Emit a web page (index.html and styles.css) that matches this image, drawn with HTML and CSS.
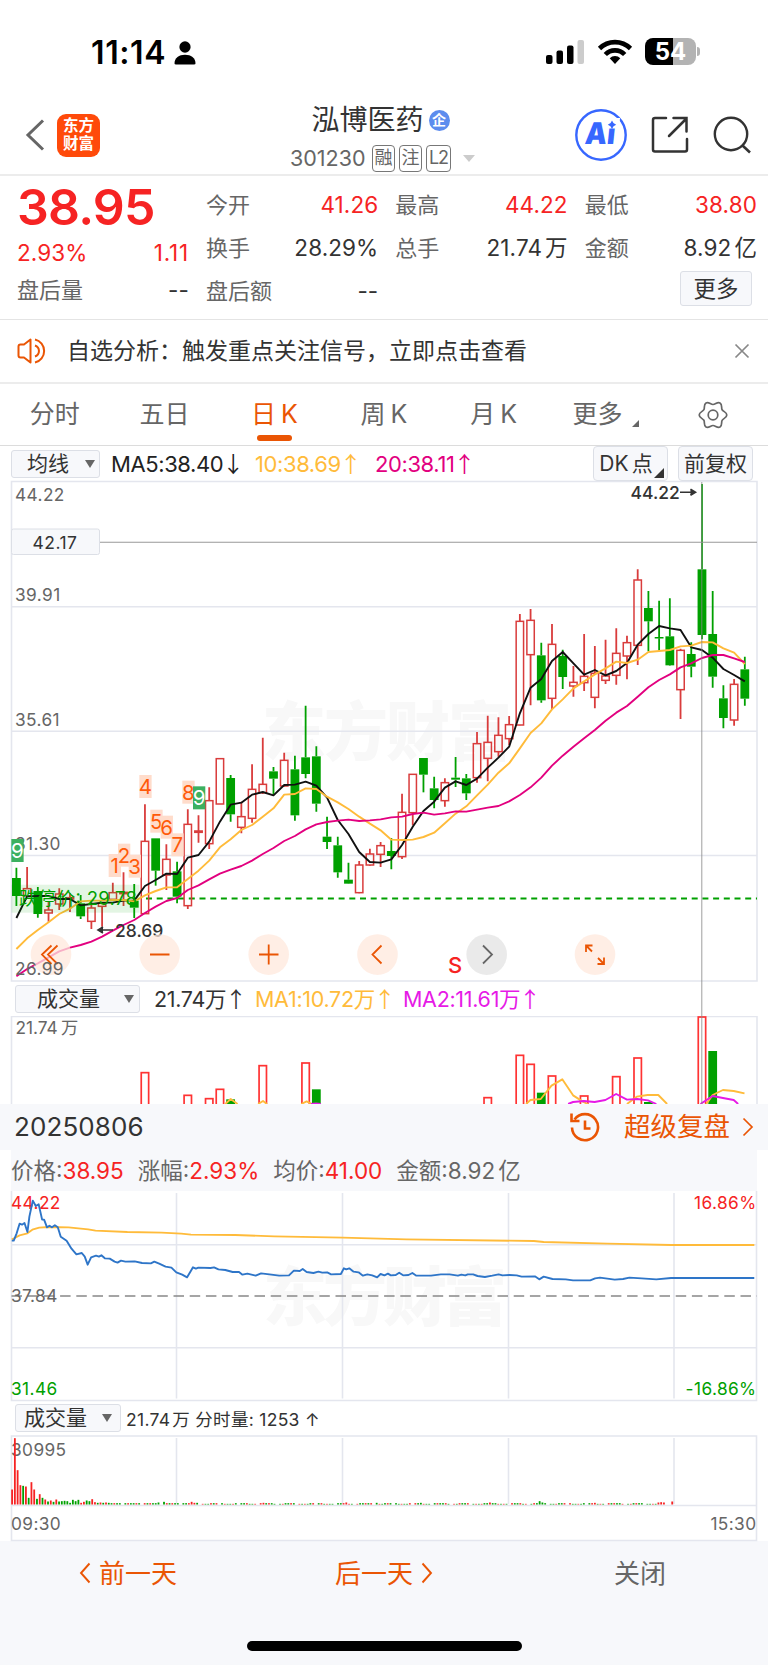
FILE: index.html
```html
<!DOCTYPE html>
<html lang="zh-CN">
<head>
  <meta charset="UTF-8">
  <meta name="viewport" content="width=device-width, initial-scale=1.0">
  <link rel="stylesheet" href="styles.css">
  <title>泓博医药 301230</title>
</head>
<body>
  <div class="status">
    <div class="status-left">
      <span class="clock">11:14</span>
      <svg width="22" height="24" viewBox="0 0 22 24"><ellipse cx="11" cy="6" rx="5.6" ry="5.8"/><path d="M0.5 22.5C0.5 17 5 13.8 11 13.8S21.500 17 21.500 22.500Q21.500 23.500 20 23.500H2Q.5 23.500 .5 22.500Z"/></svg>
    </div>
    <div class="status-right">
      <svg width="40" height="26" viewBox="0 0 40 26"><rect x="1" y="16" width="6.500" height="9" rx="2"/><rect x="11.500" y="11.500" width="6.500" height="13.500" rx="2"/><rect x="22" y="6.500" width="6.500" height="18.500" rx="2"/><rect x="32.500" y="1" width="6.500" height="24" rx="2" fill="#ccc"/></svg>
      <svg width="36" height="26" viewBox="0 0 36 26"><g fill="none" stroke="#000" stroke-width="4.600"><path d="M2.500 9.500a22 22 0 0 1 31 0"/><path d="M8.300 15.500a13.500 13.500 0 0 1 19.400 0"/></g><path d="M18 25l-5.300-5.700a7.500 7.500 0 0 1 10.600 0z"/></svg>
      <div class="battery"><span>54</span></div>
    </div>
  </div>

  <header class="header">
    <div class="header-left">
      <svg width="20" height="32" viewBox="0 0 20 32"><path d="M18 1.500L3 16l15 14.500" fill="none" stroke="#666" stroke-width="3"/></svg>
      <div class="logo">东方<br>财富</div>
    </div>
    <div class="header-title">
      <div class="name">泓博医药<span class="ent">企</span></div>
      <div class="code"><span class="code-no">301230</span><i class="tag">融</i><i class="tag">注</i><i class="tag tag-wide">L2</i><b class="drop"></b></div>
    </div>
    <div class="header-right">
      <svg width="52" height="52" viewBox="0 0 52 52"><circle cx="26" cy="26" r="24.700" fill="#fff" stroke="#3767ff" stroke-width="2.400"/><g transform="skewX(-6)"><text class="ai" x="13" y="35.500" textLength="30" lengthAdjust="spacingAndGlyphs">Ai</text><path d="M34 9H46V19.500H34Z" fill="#fff"/></g><path d="M37 11.500q1 3.300 4.200 4.200q-3.200 1-4.200 4.200q-1-3.200-4.200-4.200q3.200-.9 4.200-4.200z" fill="#3767ff"/></svg>
      <svg width="38" height="38" viewBox="0 0 38 38"><path d="M15 2H4Q2 2 2 4V33.500Q2 35.500 4 35.500H34Q36 35.500 36 33.500V23M22.500 2H35.500V15.500M35.500 2.500L18 20" fill="none" stroke="#333" stroke-width="2.500" stroke-linecap="round"/></svg>
      <svg width="38" height="38" viewBox="0 0 38 38"><circle cx="18" cy="18" r="16.200" fill="none" stroke="#333" stroke-width="2.400"/><path d="M29.500 29.500l7.500 7" stroke="#333" stroke-width="2.600"/></svg>
    </div>
  </header>

  <section class="quote">
    <div class="quote-main">
      <div class="price">38.95</div>
      <div class="cell red"><span>2.93%</span><span class="change">1.11</span></div>
      <div class="cell after"><label>盘后量</label><span>--</span></div>
    </div>
    <div class="quote-grid">
      <div class="cell"><label>今开</label><span class="red">41.26</span></div>
      <div class="cell"><label>最高</label><span class="red">44.22</span></div>
      <div class="cell"><label>最低</label><span class="red">38.80</span></div>
      <div class="cell"><label>换手</label><span>28.29%</span></div>
      <div class="cell"><label>总手</label><span>21.74<em>万</em></span></div>
      <div class="cell"><label>金额</label><span>8.92<em>亿</em></span></div>
      <div class="cell"><label>盘后额</label><span>--</span></div>
      <div></div>
      <div class="more"><button class="btn btn-more">更多</button></div>
    </div>
  </section>

  <section class="notice">
    <svg width="31" height="26" viewBox="0 0 31 26" fill="none" stroke="#ea5504" stroke-width="2"><path d="M13.500 1.500V24.500L7 19.500H3.500Q1.500 19.500 1.500 17.500V8.500Q1.500 6.500 3.500 6.500H7Z" stroke-linejoin="round"/><path d="M18 7.500a5.800 5.800 0 0 1 0 11M18 1.500a11.800 11.800 0 0 1 0 23"/></svg>
    <p>自选分析：触发重点关注信号，立即点击查看</p>
    <svg width="16" height="16" viewBox="0 0 16 16"><path d="M1.500 1.500l13 13M14.500 1.500l-13 13" stroke="#888" stroke-width="1.700"/></svg>
  </section>

  <nav class="tabs">
    <a>分时</a>
    <a>五日</a>
    <a class="active">日<u>K</u></a>
    <a>周<u>K</u></a>
    <a>月<u>K</u></a>
    <a class="tab-more">更多<b class="corner"></b></a>
    <a><svg width="30" height="30" viewBox="0 0 30 30" fill="none" stroke="#666" stroke-width="1.700"><path d="M28.800 15C28.800 18 25.300 18.200 24.100 20.300C23 22.200 24.600 25.600 22 27.100C19.400 28.600 17.400 25.500 15 25.500C12.600 25.500 10.600 28.600 8 27.100C5.400 25.600 7 22.200 5.900 20.300C4.700 18.200 1.200 18 1.200 15C1.200 12 4.700 11.800 5.900 9.700C7 7.800 5.400 4.400 8 2.900C10.600 1.400 12.600 4.500 15 4.500C17.400 4.500 19.400 1.400 22 2.900C24.600 4.400 23 7.800 24.100 9.700C25.300 11.800 28.800 12 28.800 15Z"/><circle cx="15" cy="15" r="4.800"/></svg></a>
  </nav>

  <div class="ma-row">
    <button class="btn btn-ma">均线<b class="tri"></b></button>
    <span class="ma5">MA5:38.40<s>↓</s></span>
    <span class="ma10">10:38.69<s>↑</s></span>
    <span class="ma20">20:38.11<s>↑</s></span>
    <button class="btn btn-tall btn-dk">DK<em>点</em><b class="corner"></b></button>
    <button class="btn btn-tall">前复权</button>
  </div>

  <svg class="chart" width="768" height="501" viewBox="0 480 768 501">
    <text class="watermark" x="262" y="755" textLength="250">东方财富</text>
    <g class="grid">
      <path d="M11.500 481.500H757V981H11.500ZM11.500 606.700H757M11.500 731.300H757M11.500 855.500H757"/>
    </g>
    <g class="axis">
      <text x="15" y="501">44.22</text>
      <text x="15" y="601.300">39.91</text>
      <text x="15" y="726">35.61</text>
      <text x="15" y="850">31.30</text>
    </g>
    <path d="M146 898.500H757" stroke="#00a000" stroke-width="1.800" stroke-dasharray="6 4.700"/>
    <g class="candles" id="candles"></g>
    <rect x="11.500" y="884.700" width="128" height="28" fill="#00a000" opacity=".11"/>
    <text class="limit" x="19" y="905" textLength="118">跌停价: 29.78</text>
    <g id="counts"></g>
    <g class="mark">
      <text x="115" y="937">28.69</text>
      <text x="630.500" y="498.700">44.22</text>
      <path d="M113 930H99M103 927L98 930L103 933M680 492.300H694M690.500 489.300L695.500 492.300L690.500 495.300"/>
    </g>
    <g class="tools">
      <circle cx="51" cy="954.600" r="20.300"/><circle cx="159.700" cy="954.600" r="20.300"/><circle cx="268.700" cy="954.600" r="20.300"/><circle cx="377.500" cy="954.600" r="20.300"/><circle class="off" cx="486.700" cy="954.600" r="20.300"/><circle cx="595" cy="954.600" r="20.300"/>
      <path d="M51.500 945.500L42 954.600L51.500 964M57.500 945.500L48 954.600L57.500 964M150 954.500H169.500M259 954.500H278.500M268.700 944.500V964.500M381.500 945.500L372.500 954.600L381.500 963.500M592 951.500L586.500 946M586 952V945.500H592.500M598 958L603.500 963.500M604 957.500V964H597.500"/>
      <path class="next" d="M483 945.500L492 954.600L483 963.500"/>
    </g>
    <g class="axis"><text x="15" y="975">26.99</text></g>
    <text class="sell" x="448" y="972.500">S</text>
    <path d="M100 542.300H757" stroke="#999" stroke-width="1.100"/>
    <path d="M701.800 482V1016" stroke="#888" stroke-width="1" opacity=".8"/>
    <rect x="11.500" y="529" width="88" height="25.500" rx="2" fill="#f7f8fb" stroke="#dcdfe6"/>
    <text class="cross" x="32.500" y="549">42.17</text>
  </svg>

  <div class="vol-row">
    <button class="btn btn-vol">成交量<b class="tri"></b></button>
    <span class="v0">21.74万<s>↑</s></span>
    <span class="v1">MA1:10.72万<s>↑</s></span>
    <span class="v2">MA2:11.61万<s>↑</s></span>
  </div>

  <svg class="chart clip" width="768" height="88" viewBox="0 1016 768 88">
    <path class="grid" d="M11.500 1110V1016.500H757V1110"/>
    <g id="volumes"></g>
    <path d="M701.800 1016V1104" stroke="#888" opacity=".8"/>
    <g class="axis"><text x="15.500" y="1034" textLength="42.500">21.74</text><text x="61" y="1034">万</text></g>
  </svg>

  <div class="replay">
    <span class="date">20250806</span>
    <svg width="30" height="30" viewBox="0 0 30 30" fill="none" stroke="#ea5504" stroke-width="2.600"><path d="M4.500 7.500A13 13 0 1 1 2 15.500"/><path d="M1.500 1.500V9H9.500" /><path d="M15 8.500V16.500H20.500"/></svg>
    <span class="replay-link">超级复盘</span>
    <svg width="12" height="20" viewBox="0 0 12 20"><path d="M1.500 1.500L10 10L1.500 18.500" fill="none" stroke="#ea5504" stroke-width="1.700"/></svg>
  </div>

  <div class="info">
    <span>价格:<b>38.95</b></span>
    <span>涨幅:<b>2.93%</b></span>
    <span>均价:<b>41.00</b></span>
    <span>金额:8.92<em>亿</em></span>
  </div>

  <svg class="chart" width="768" height="210" viewBox="0 1191 768 210">
    <text class="watermark" x="263" y="1320" textLength="244">东方财富</text>
    <path class="grid" d="M11.500 1191V1400.500H756.500V1191M11.500 1244.700H757M11.500 1347.700H757M176.500 1193V1398.500M342.500 1193V1398.500M508.500 1193V1398.500M674 1193V1398.500"/>
    <path d="M11.500 1296H757" stroke="#888" stroke-width="1.600" stroke-dasharray="10.500 5.700"/>
    <g class="axis">
      <text class="up" x="11" y="1209">44.22</text>
      <text x="11" y="1302">37.84</text>
      <text class="down" x="11" y="1394.500">31.46</text>
      <text class="up" x="756.500" y="1209" text-anchor="end">16.86%</text>
      <text class="down" x="756.500" y="1394.500" text-anchor="end">-16.86%</text>
    </g>
    <g id="intraday"></g>
  </svg>

  <div class="min-row">
    <button class="btn btn-min">成交量<b class="tri"></b></button>
    <span>21.74<em>万</em> 分时量: 1253 ↑</span>
  </div>

  <svg class="chart" width="768" height="106" viewBox="0 1435 768 106">
    <path class="grid" d="M11.500 1436H756.500V1540.500H11.500ZM11.500 1505.500H757M176.500 1438V1504M342.500 1438V1504M508.500 1438V1504M674 1438V1504"/>
    <g class="axis">
      <text x="11" y="1455.500">30995</text>
      <text x="11" y="1530">09:30</text>
      <text x="756.500" y="1530" text-anchor="end">15:30</text>
    </g>
    <g id="minutes"></g>
  </svg>

  <footer class="footer">
    <div class="days">
      <a><svg width="12" height="22" viewBox="0 0 12 22"><path d="M10.500 1.500L2 11L10.500 20.500"/></svg><span>前一天</span></a>
      <a><span>后一天</span><svg width="12" height="22" viewBox="0 0 12 22"><path d="M1.500 1.500L10 11L1.500 20.500"/></svg></a>
      <a class="close"><span>关闭</span></a>
    </div>
    <div class="home"></div>
  </footer>
  <script src="charts.js"></script>
</body>
</html>
```
FILE: styles.css
```css
body {
  margin: 0;
  width: 768px;
  background: #fff;
  color: #333;
  font-family: Inter, "Noto Sans CJK SC", sans-serif;
  font-size: 22px;
}

em, i, u, s {
  font-style: normal;
  text-decoration: none;
}

svg {
  flex: none;
  display: block;
}

.red {
  color: #f62323;
}

/* status bar */
.status {
  height: 84px;
  padding: 20px 72px 0 91px;
  box-sizing: border-box;
  display: flex;
  justify-content: space-between;
}

.status-left, .status-right {
  display: flex;
  align-items: center;
  height: 65px;
}

.status-right {
  height: 63px;
  gap: 12px;
}

.clock {
  width: 83px;
  font-size: 32px;
  font-weight: 600;
  letter-spacing: 0.6px;
  color: #000;
}

.battery {
  position: relative;
  width: 51px;
  height: 27px;
  border-radius: 8px;
  background: linear-gradient(90deg, #000 54%, #b3b3b3 54%);
  color: #fff;
  font-size: 24px;
  font-weight: 700;
  line-height: 27px;
  text-align: center;
}

.battery::after {
  content: "";
  position: absolute;
  left: 52px;
  top: 9px;
  width: 3px;
  height: 9px;
  border-radius: 0 3px 3px 0;
  background: #b3b3b3;
}

/* header */
.header {
  height: 92px;
  box-sizing: border-box;
  border-bottom: 2px solid #ececec;
  padding: 0 17px 0 25px;
  display: grid;
  grid-template-columns: 1fr auto 1fr;
}

.header-left {
  display: flex;
  align-items: center;
  height: 102px;
  gap: 12px;
}

.logo {
  width: 43px;
  height: 43px;
  border-radius: 9px;
  background: #ff4a0a;
  color: #fff;
  font-size: 15.500px;
  font-weight: 700;
  line-height: 18px;
  text-align: center;
  padding-top: 3px;
  box-sizing: border-box;
}

.header-title {
  padding-top: 16px;
  margin-left: -11px;
}

.name {
  display: flex;
  align-items: center;
  justify-content: center;
  height: 40px;
  margin-left: -4px;
  font-size: 28px;
  line-height: 40px;
}

.ent {
  width: 21px;
  height: 21px;
  margin-left: 5px;
  border-radius: 50%;
  background: #5c8cee;
  color: #fff;
  font-size: 14px;
  font-weight: 700;
  line-height: 20px;
  text-align: center;
}

.code {
  display: flex;
  align-items: center;
  margin-top: 4px;
  color: #666;
  height: 28px;
}

.code-no {
  width: 82px;
  font-size: 21.500px;
}

.tag {
  width: 21px;
  height: 25px;
  margin-right: 4px;
  border: 1px solid #777;
  border-radius: 4px;
  font-size: 18px;
  line-height: 23px;
  text-align: center;
}

.tag-wide {
  width: 23px;
  letter-spacing: -1px;
}

.drop {
  margin-left: 8px;
  border: 6.500px solid transparent;
  border-top: 7px solid #ccc;
  border-bottom: 0;
}

.header-right {
  display: flex;
  align-items: center;
  justify-content: flex-end;
  height: 102px;
  gap: 24px;
}

.ai {
  font-size: 30px;
  font-weight: 900;
  fill: #3767ff;
}

/* quote */
.quote {
  height: 144px;
  box-sizing: border-box;
  border-bottom: 1px solid #e4e4e4;
  padding: 0 11px 0 17px;
  display: flex;
  gap: 17px;
}

.quote-main {
  width: 172px;
}

.price {
  height: 56px;
  padding-top: 3px;
  line-height: 56px;
  font-size: 50px;
  font-weight: 600;
  letter-spacing: -0.8px;
  color: #f62323;
}

.cell {
  display: flex;
  justify-content: space-between;
  align-items: center;
  height: 36px;
  line-height: 36px;
  font-size: 22.500px;
  letter-spacing: 0.1px;
}

.cell label {
  color: #666;
  font-size: 22px;
  letter-spacing: 0;
}

.change {
  letter-spacing: 0.8px;
}

.cell em, .info em, .btn em {
  margin-left: 3px;
}

.after {
  margin-top: 1px;
}

.quote-grid {
  flex: 1;
  display: grid;
  grid-template-columns: repeat(3, 1fr);
  column-gap: 17px;
  grid-template-rows: 43px 43px 43px;
  align-items: center;
  padding-top: 7px;
  height: 129px;
}

.more {
  display: flex;
  justify-content: flex-end;
  padding: 0 5px 4px 0;
}

.btn {
  display: flex;
  align-items: center;
  justify-content: center;
  box-sizing: border-box;
  height: 28px;
  padding: 0;
  border: 1px solid #dcdfe6;
  border-radius: 3px;
  background: #f7f8fb;
  color: #333;
  font: inherit;
  font-size: 21px;
  line-height: 26px;
}

.btn-more {
  width: 72px;
  height: 35px;
  font-size: 22.500px;
}

/* notice */
.notice {
  height: 64px;
  box-sizing: border-box;
  border-bottom: 2px solid #ececec;
  padding: 0 18px 0 17px;
  display: flex;
  align-items: center;
}

.notice p {
  flex: 1;
  margin: 0 0 0 19px;
  font-size: 23px;
  line-height: 32px;
}

/* tabs */
.tabs {
  height: 62px;
  box-sizing: border-box;
  border-bottom: 1px solid #dcdcdc;
  display: grid;
  grid-template-columns: repeat(7, 1fr);
}

.tabs a {
  position: relative;
  display: flex;
  align-items: baseline;
  justify-content: center;
  color: #666;
  font-size: 25px;
  line-height: 60px;
}

.tabs svg {
  align-self: center;
}

.tabs u {
  margin-left: 5px;
}

.tabs .active {
  color: #ea5504;
}

.active::after {
  content: "";
  position: absolute;
  bottom: 4px;
  width: 35px;
  height: 6px;
  border-radius: 3px;
  background: #ea5504;
}

.corner {
  align-self: flex-end;
  border-left: 7px solid transparent;
  border-bottom: 7px solid #666;
}

.tab-more .corner {
  margin: 0 0 18px 10px;
}

.tab-more {
  padding-left: 5px;
}

.tri {
  border: 5px solid transparent;
  border-top: 8px solid #666;
  border-bottom: 0;
}

/* indicator rows */
.ma-row {
  height: 34px;
  padding: 0 15px 0 11px;
  display: flex;
  align-items: center;
  letter-spacing: -0.4px;
  line-height: 28px;
  white-space: nowrap;
}

.ma-row s, .vol-row s {
  font-family: "Noto Sans CJK SC", sans-serif;
  display: inline-block;
  width: 16px;
  margin-left: -1px;
}

.btn-ma {
  width: 89px;
  justify-content: space-between;
  padding: 0 4px 0 15px;
  margin: 1px 11px 0 0;
}

.ma5 {
  width: 144px;
  color: #222;
}

.ma10, .v1 {
  color: #ffbb3a;
}

.ma10 {
  width: 120px;
}

.ma20 {
  color: #e2007f;
  flex: 1;
}

.btn-tall {
  width: 75px;
  height: 35px;
  margin-top: 1px;
  border-radius: 4px;
}

.btn-dk {
  margin-right: 10px;
}

.btn-dk .corner {
  border-left-width: 10px;
  border-bottom: 10px solid #333;
  margin: 0 -2px 2px 1px;
}

.chart {
  overflow: visible;
}

.clip {
  overflow: hidden;
}

.vol-row {
  height: 35px;
  padding-left: 15px;
  display: flex;
  align-items: center;
  font-size: 21.500px;
  letter-spacing: -0.3px;
  line-height: 28px;
  white-space: nowrap;
}

.btn-vol {
  width: 125px;
  justify-content: space-between;
  padding: 0 5px 0 21px;
  margin-right: 14px;
}

.v0 {
  width: 101px;
}

.v1 {
  width: 148px;
}

.v2 {
  color: #e619e6;
}

/* svg parts */
.grid, .grid path {
  fill: none;
  stroke: #e4e6ee;
  stroke-width: 1.600;
}

.axis {
  font-size: 17.300px;
  letter-spacing: 0.4px;
  fill: #666;
}

.axis .up {
  fill: #f62323;
}

.axis .down {
  fill: #00a000;
}

.watermark {
  font-family: "Noto Sans CJK SC", sans-serif;
  font-size: 64px;
  font-weight: 900;
  fill: #f8f8f8;
}

.limit {
  font-size: 18.500px;
  fill: #00a000;
}

.mark {
  font-size: 17.500px;
  font-weight: 500;
  fill: #333;
}

.mark path {
  stroke: #333;
  stroke-width: 1.600;
}

.cross {
  font-size: 17.500px;
  letter-spacing: 0.5px;
  fill: #333;
}

.tools circle {
  fill: #ffe8dc;
  opacity: 0.75;
}

.tools .off {
  fill: #e3e3e3;
}

.tools path {
  fill: none;
  stroke: #ea5504;
  stroke-width: 1.800;
}

.tools .next {
  stroke: #666;
}

.sell {
  font-size: 22px;
  font-weight: 500;
  fill: #f62323;
}

.count {
  font-size: 20.500px;
  text-anchor: middle;
}

.line {
  fill: none;
  stroke-width: 1.900;
  stroke-linejoin: round;
  vector-effect: non-scaling-stroke;
}

/* replay panel */
.replay {
  height: 46px;
  padding: 0 14px;
  display: flex;
  align-items: center;
  line-height: 46px;
  background: #f7f8fb;
}

.date {
  flex: 1;
  font-size: 26px;
  letter-spacing: 0.1px;
}

.replay-link {
  margin: -2px 12px 0 24px;
  color: #ea5504;
  font-size: 26.500px;
}

.info {
  height: 41px;
  margin: 0 11px;
  display: flex;
  gap: 14px;
  background: #f7f8fb;
  color: #666;
  font-size: 22.500px;
  line-height: 41px;
  white-space: nowrap;
}

.info b {
  color: #f62323;
  font-weight: 400;
}

.min-row {
  height: 34px;
  padding-left: 15px;
  display: flex;
  align-items: center;
  gap: 5px;
  font-size: 17.500px;
  letter-spacing: 0.3px;
}

.min-row em {
  margin-left: 2px;
}

.btn-min {
  width: 106px;
  justify-content: space-between;
  padding: 0 8px;
}

/* footer */
.footer {
  height: 124px;
  background: #f7f8fb;
}

.days {
  display: grid;
  grid-template-columns: repeat(3, 1fr);
  height: 100px;
}

.days a {
  display: flex;
  align-items: center;
  justify-content: center;
  gap: 8px;
  height: 64px;
  color: #ea5504;
  font-size: 26px;
}

.days span {
  margin-top: -4px;
}

.days path {
  fill: none;
  stroke: #ea5504;
  stroke-width: 1.900;
}

.days .close {
  color: #666;
}

.home {
  width: 275px;
  height: 10px;
  margin: 0 auto;
  border-radius: 5px;
  background: #000;
}
```
FILE: charts.js
```javascript
const RED = "#d93c3c";
const GREEN = "#00a000";
const NS = "http://www.w3.org/2000/svg";

function add(parent, tag, attrs, text) {
  const el = document.createElementNS(NS, tag);
  for (const key in attrs) el.setAttribute(key, attrs[key]);
  if (text) el.textContent = text;
  parent.appendChild(el);
  return el;
}

// x of the n-th daily bar
function barX(n) {
  return 16.4 + n * 10.712;
}

// color, high, body top, body bottom, low (three units per pixel)
const candles = [
  ["g",1163,1194,1248,1278],["r",1161,1226,1248,1250],["g",1221,1233,1302,1313],["r",1263,1290,1299,1325],
  ["r",1225,1242,1272,1290],["r",1240,1253,1257,1296],["g",1245,1270,1309,1317],["r",1265,1284,1324,1347],
  ["r",1268,1270,1279,1340],["r",1208,1238,1258,1260],["r",1177,1237,1241,1278],["g",1212,1262,1283,1314],
  ["r",973,1084,1301,1301],["g",1075,1075,1172,1217],["r",1093,1138,1185,1230],["g",1145,1174,1250,1270],
  ["r",988,1033,1277,1287],["r",1006,1053,1057,1088],["r",922,962,1091,1107],["r",836,836,972,972],
  ["g",885,894,1003,1025],["r",965,1010,1042,1060],["r",853,928,1015,1028],["r",773,913,938,942],
  ["g",861,874,896,942],["r",818,841,918,920],["g",827,868,1006,1022],["g",677,832,882,895],
  ["g",799,829,971,995],["g",1010,1070,1086,1107],["g",1070,1096,1177,1193],["g",1148,1199,1211,1212],
  ["r",1143,1155,1238,1240],["r",1106,1122,1155,1157],["r",1086,1097,1123,1161],["g",1074,1113,1128,1168],
  ["r",941,997,1130,1137],["r",883,883,998,1036],["g",834,834,884,937],["g",890,925,960,985],
  ["r",895,908,962,980],["g",831,893,899,921],["g",882,895,940,960],["r",756,791,893,908],
  ["r",707,787,835,904],["r",712,766,815,830],["r",708,734,776,795],["r",402,424,735,736],
  ["r",387,421,524,676],["g",488,526,661,668],["r",432,493,655,687],["g",509,528,591,627],
  ["r",558,607,618,650],["r",462,589,608,633],["r",498,580,652,685],["r",479,588,601,612],
  ["r",445,520,586,614],["r",467,488,528,598],["r",268,300,496,555],["g",333,384,424,514],
  ["g",362,471,475,512],["g",355,469,556,557],["r",506,511,629,717],["g",487,522,560,592],
  ["g",12,268,465,478],["g",333,462,590,623],["g",616,655,714,745],["r",597,613,720,737],
  ["g",530,568,656,677]
];

const averages = {
  "#111": [1314,1249,1248,1248,1257,1257,1276,1272,1268,1268,1262,1262,1218,1200,1181,1182,1133,1125,1085,1025,974,968,944,936,946,915,914,905,917,953,1020,1062,1116,1146,1148,1138,1095,1040,993,965,923,904,915,896,863,833,800,700,623,597,543,516,550,584,570,586,573,549,494,462,438,445,450,502,510,533,567,585,604],
  "#ffbb3a": [1407,1375,1350,1327,1302,1286,1264,1262,1262,1260,1260,1264,1246,1233,1222,1222,1197,1172,1142,1102,1078,1050,1035,1010,985,944,942,925,927,950,967,987,1010,1031,1051,1079,1080,1079,1071,1058,1030,1001,979,946,914,878,850,805,759,730,688,658,625,604,583,565,545,549,539,516,513,510,499,497,486,487,505,518,552],
  "#e2007f": [1489,1467,1450,1432,1414,1403,1395,1385,1370,1352,1335,1320,1299,1280,1263,1254,1230,1216,1198,1181,1169,1158,1142,1122,1104,1083,1068,1048,1033,1026,1022,1019,1023,1021,1018,1012,1010,1002,998,1004,1000,994,995,989,983,978,964,945,922,893,857,827,800,775,750,722,698,678,650,622,600,583,562,550,534,525,525,535,546]
};

const candleBox = document.getElementById("candles");
candles.forEach(function (c, i) {
  const x = barX(i);
  const [high, top, bottom, low] = c.slice(1).map(v => 480 + v / 3);
  const color = c[0] === "r" ? RED : GREEN;
  add(candleBox, "path", {
    d: `M${x} ${high}V${top}M${x} ${bottom}V${low}`, stroke: color, "stroke-width": 1.8
  });
  if (c[0] === "r") {
    add(candleBox, "rect", {
      x: x - 3.7, y: top, width: 7.4, height: Math.max(bottom - top, 1), fill: "none", stroke: color, "stroke-width": 1.5
    });
  } else {
    add(candleBox, "rect", {
      x: x - 4.4, y: top, width: 8.8, height: Math.max(bottom - top, 1.5), fill: color
    });
  }
});
for (const color in averages) {
  const points = averages[color].map((v, i) => barX(i) + "," + (480 + v / 3)).join(" ");
  add(candleBox, "polyline", { class: "line", points: points, stroke: color });
}

// sequence numbers over the bars
const counts = [[1,344,1122],[2,372,1091],[3,404,1124],[4,436,885],[5,469,989],[6,500,1007],[7,532,1060],[8,565,902],[9,597,919],[9,52,1077]];
const countBox = document.getElementById("counts");
counts.forEach(function ([n, cx, top]) {
  const x = cx / 3;
  const y = 480 + top / 3;
  add(countBox, "rect", { x: x - 6, y: y, width: 12.3, height: 23, fill: n === 9 ? "#3cb060" : "#ffdccb" });
  add(countBox, "text", { class: "count", x: x, y: y + 19, fill: n === 9 ? "#fff" : "#ff5a0a" }, String(n));
});

// daily volume: bar index, color, top
const volumes = [[12,"r",278],[16,"r",346],[18,"r",356],[19,"r",328],[20,"g",358],[23,"r",257],[27,"r",249],[28,"g",328],[44,"r",353],[47,"r",226],[48,"r",253],[49,"g",338],[50,"r",288],[53,"r",348],[56,"r",290],[58,"r",234],[59,"g",366],[64,"r",111],[65,"g",213]];
const volumeBox = document.getElementById("volumes");
volumes.forEach(function ([n, c, top]) {
  const y = 980 + top / 3;
  add(volumeBox, "rect", {
    x: barX(n) - (c === "r" ? 3.7 : 4.4), y: y, width: c === "r" ? 7.4 : 8.8, height: 140,
    fill: c === "r" ? "none" : GREEN, stroke: c === "r" ? "#f33" : "none", "stroke-width": 1.7
  });
});
const volumeLines = add(volumeBox, "g", { transform: "translate(0 980) scale(.4898 .33333)" });
add(volumeLines, "path", {
  class: "line", stroke: "#ffbb3a",
  d: "M460 372L471 357L485 372M527 372L537 363L545 372M615 372L626 364L637 372M1074 372L1083 360L1104 357L1126 317L1148 298L1170 346L1190 365L1200 372M1280 372L1300 350L1322 345L1344 345L1362 372M1442 372L1455 345L1476 330L1498 333L1520 340"
});
add(volumeLines, "path", {
  class: "line", stroke: "#e619e6",
  d: "M635 372L645 370L655 372M1160 372L1170 366L1192 363L1214 366L1236 360L1258 342L1280 359L1301 357L1323 361L1340 372M1430 372L1455 348L1476 354L1498 360L1507 372"
});

// intraday price and average
const intraday = add(document.getElementById("intraday"), "g", { transform: "translate(0 1150) scale(.4898 .33333)" });
add(intraday, "polyline", {
  class: "line", stroke: "#ffbb3a",
  points: "24,268 30,264 40,256 56,250 66,239 80,233 100,231 140,232 180,238 195,242 260,246 330,248 370,251 390,254 480,255 560,259 700,263 830,268 1090,273 1110,276 1240,281 1370,285 1540,285"
});
add(intraday, "polyline", {
  class: "line", stroke: "#2e75c8",
  points: "24,272 28,272 34,250 40,221 45,224 50,219 56,246 60,200 67,152 73,168 79,163 86,209 90,209 96,232 101,227 106,232 112,226 118,232 124,260 136,272 146,296 156,313 167,309 173,320 179,344 186,322 196,317 202,320 207,316 214,325 224,326 234,335 240,338 247,332 256,335 275,334 290,339 308,340 315,335 325,341 338,350 350,353 360,367 372,374 382,382 394,352 400,356 405,353 430,354 437,352 446,358 460,360 475,366 488,366 495,374 505,371 522,377 533,370 550,373 570,377 590,376 600,362 612,363 618,357 626,366 640,369 650,365 658,368 668,367 676,373 696,372 702,355 707,358 713,355 722,365 732,367 741,377 750,373 760,376 770,382 777,372 785,376 792,371 798,376 808,375 815,368 823,376 834,375 842,369 850,377 880,377 900,373 918,373 935,377 942,374 950,376 955,373 966,373 975,378 990,381 1005,377 1018,373 1026,376 1040,375 1055,376 1065,380 1092,379 1101,388 1110,380 1128,387 1155,388 1170,391 1205,391 1215,385 1225,383 1255,389 1272,387 1285,383 1310,385 1340,388 1370,384 1540,384"
});

// volume per minute, the opening first, then single spikes by minute
const opening = "r45 r199 r103 r58 g56 r54 g20 r67 r45 g17 r31 g20 r15 g9 r12 g8 r15 g9 g10 g11 g10 g5 g14 g10 g14 r5 r8 g12 g10 r16 r7 g5 r6 g5 r6 g5".split(" ");
const spikes = { 53: "g6", 55: "g8", 65: "r8", 66: "r5", 67: "g5", 91: "r5", 121: "r6", 132: "g5", 148: "g5", 173: "r6", 191: "g10", 192: "g6", 211: "r5", 234: "r6", 235: "r7", 236: "r6", 239: "r9" };
const minuteBox = document.getElementById("minutes");
for (let m = 0; m < 240; m++) {
  let bar = opening[m] || spikes[m];
  if (!bar) {
    if (m > 236 || m % 7 === 5) continue;
    bar = ((m * 5) % 8 < 3 ? "r" : "g") + (m < 66 || m % 9 < 5 ? 4 : 2);
  }
  const height = bar.slice(1) / 3;
  add(minuteBox, "rect", {
    x: 11.2 + m * 2.762, y: 1504.5 - height, width: 1.8, height: height, fill: bar[0] === "r" ? "#f62323" : GREEN
  });
}
```
